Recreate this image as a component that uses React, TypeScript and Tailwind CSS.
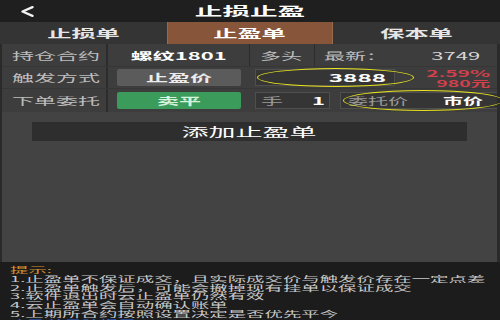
import React from "react";

const T = ({ c, children }: { c: string; children: React.ReactNode }) => (
  <span className={`inline-block whitespace-nowrap ${c}`}>{children}</span>
);

const tips = [
  "1.止盈单不保证成交，且实际成交价与触发价存在一定点差",
  "2.止盈单触发后，可能会撤掉现有挂单以保证成交",
  "3.软件退出时云止盈单仍然有效",
  "4.云止盈单会自动确认账单",
  "5.上期所合约按照设置决定是否优先平今",
];

export default function App() {
  return (
    <div className="w-[500px] h-[320px] overflow-hidden bg-[#434343] flex flex-col font-['Noto_Sans_CJK_SC','Noto_Sans',sans-serif]">
      {/* header */}
      <div className="h-[22px] bg-[#1f1f1f] grid grid-cols-[1fr_auto_1fr] items-center">
        <div className="pl-[20px] flex items-center">
          <svg width="14" height="11" viewBox="0 0 14 11">
            <polyline points="12.5,1.2 2.5,5.5 12.5,9.8" fill="none" stroke="#f2f2f2" strokeWidth="2.4" strokeLinecap="round" strokeLinejoin="round" />
          </svg>
        </div>
        <T c="text-[12px] leading-[14px] font-bold text-white scale-x-[2.3] origin-center">止损止盈</T>
        <div />
      </div>
      {/* tabs */}
      <div className="h-[22px] bg-[#343434] grid grid-cols-3 text-[11px] font-bold">
        <div className="flex items-center justify-center text-[#e6e6e6]">
          <T c="scale-x-[2.2] origin-center">止损单</T>
        </div>
        <div className="flex items-center justify-center text-white bg-[#87553a] border-x border-[#9a6a4a]">
          <T c="scale-x-[2.2] origin-center">止盈单</T>
        </div>
        <div className="flex items-center justify-center text-[#e6e6e6]">
          <T c="scale-x-[2.2] origin-center">保本单</T>
        </div>
      </div>
      {/* body */}
      <div className="flex-1 flex flex-col border-l-2 border-r-[3px] border-[#2a2a2a]">
        <div className="flex flex-col bg-[#3d3d3d] text-[10px]">
          {/* row 1 */}
          <div className="h-[23px] flex items-center border-b border-[#363636]">
            <div className="w-[106px] h-full flex items-center pl-[10px] border-r-2 border-[#2c2c2c] text-[#bdbdbd]">
              <T c="scale-x-[2.2] origin-left">持仓合约</T>
            </div>
            <div className="w-[142px] h-full flex items-center justify-center border-r border-[#2c2c2c] text-white font-bold">
              <T c="scale-x-[2.2] origin-center">螺纹1801</T>
            </div>
            <div className="w-[65px] h-full flex items-center pl-[10px] border-r border-[#2c2c2c] text-[#bdbdbd]">
              <T c="scale-x-[2.1] origin-left">多头</T>
            </div>
            <div className="flex-1 h-full flex items-center justify-between pl-[9px] pr-[17px] text-[#bdbdbd]">
              <T c="scale-x-[2.1] origin-left">最新：</T>
              <T c="scale-x-[2.2] origin-right text-[#d8d8d8]">3749</T>
            </div>
          </div>
          {/* row 2 */}
          <div className="h-[22px] flex items-center border-b border-[#363636]">
            <div className="w-[106px] h-full flex items-center pl-[10px] border-r-2 border-[#2c2c2c] text-[#bdbdbd]">
              <T c="scale-x-[2.2] origin-left">触发方式</T>
            </div>
            <div className="ml-[9px] w-[124px] h-[17px] rounded-[2px] bg-[#5b5b5b] flex items-center justify-center text-[#ececec] font-bold">
              <T c="scale-x-[2.2] origin-center">止盈价</T>
            </div>
            <div className="ml-[14px] w-[140px] h-[17px] relative bg-[#353535] border border-[#4f4f4f] flex items-center justify-end pr-[8px] text-white font-bold text-[11px]">
              <T c="scale-x-[2.2] origin-right">3888</T>
              <div className="absolute left-[1px] top-[-2px] w-[157px] h-[19px] rounded-[50%] border-[1.5px] border-[#e8e21e]" />
            </div>
            <div className="flex-1 flex flex-col items-end pr-[7px] text-[#d2404c] font-bold text-[9.5px] leading-[10px]">
              <T c="scale-x-[2.2] origin-right">2.59%</T>
              <T c="scale-x-[2.05] origin-right">980元</T>
            </div>
          </div>
          {/* row 3 */}
          <div className="h-[23px] flex items-center">
            <div className="w-[106px] h-full flex items-center pl-[10px] border-r-2 border-[#2c2c2c] text-[#bdbdbd]">
              <T c="scale-x-[2.2] origin-left">下单委托</T>
            </div>
            <div className="ml-[9px] w-[124px] h-[17px] rounded-[2px] bg-[#3b9b5b] flex items-center justify-center text-[#d4f2dc] font-bold">
              <T c="scale-x-[2.2] origin-center">卖平</T>
            </div>
            <div className="ml-[14px] w-[75px] h-[17px] bg-[#353535] border border-[#4f4f4f] flex items-center justify-between pl-[5px] pr-[4px]">
              <T c="scale-x-[2.2] origin-left text-[#9a9a9a]">手</T>
              <T c="scale-x-[2.2] origin-right text-white font-bold">1</T>
            </div>
            <div className="ml-[10px] flex-1 h-[17px] relative bg-[#353535] border border-[#4f4f4f] border-r-0 flex items-center justify-between pl-[7px] pr-[14px]">
              <T c="scale-x-[2.0] origin-left text-[#9a9a9a]">委托价</T>
              <T c="scale-x-[2.0] origin-right text-white font-bold">市价</T>
              <div className="absolute left-[2px] top-[-3px] w-[160px] h-[21px] rounded-[50%] border-[1.5px] border-[#e8e21e]" />
            </div>
          </div>
        </div>
        {/* add button */}
        <div className="mt-[10px] mx-[30px] h-[19px] bg-[#2e2e2e] flex items-center justify-center text-[12px] text-white">
          <T c="scale-x-[2.25] origin-center">添加止盈单</T>
        </div>
        <div className="flex-1" />
      </div>
      {/* tips */}
      <div className="h-[58px] bg-[#1c1c1c] pt-[4px] pl-[10px] text-[8px] leading-[8.8px] text-[#c9c9c9]">
        <div>
          <T c="scale-x-[2.3] origin-left text-[#d0932e]">提示:</T>
        </div>
        {tips.map((t) => (
          <div key={t}>
            <T c="scale-x-[2.3] origin-left">{t}</T>
          </div>
        ))}
        <div>
          <T c="scale-x-[2.25] origin-left text-[#2d62d6]">止盈单风险提示</T>
        </div>
      </div>
    </div>
  );
}
